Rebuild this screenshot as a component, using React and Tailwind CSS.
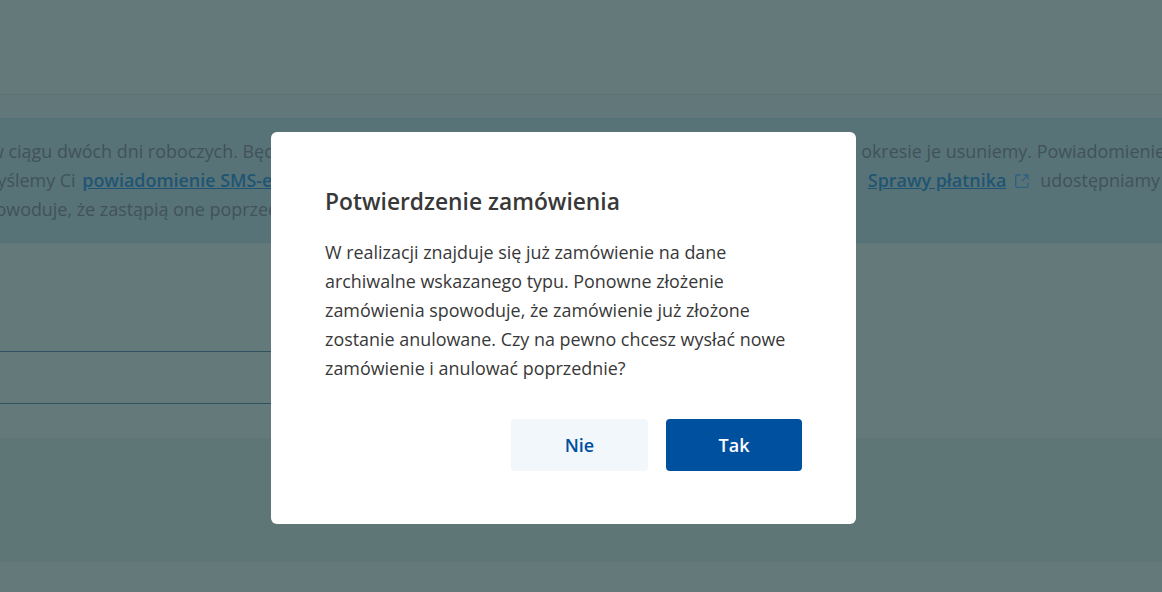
import React from "react";

const font = "font-['Open_Sans',sans-serif]";

const ExternalIcon = () => (
  <svg width="14" height="14" viewBox="0 0 14 14" fill="none" stroke="#2f6080" strokeWidth="1.3" className="shrink-0">
    <path d="M5.500 1H2a1.300 1.300 0 0 0-1.300 1.300V12a1.300 1.300 0 0 0 1.300 1.300H11.700a1.300 1.300 0 0 0 1.300-1.300V8.500" />
    <path d="M8.500 1H13V5.500M13 1L7 7" />
  </svg>
);

export default function App() {
  return (
    <div className={`relative h-[592px] w-[1162px] overflow-hidden bg-[#64797a] ${font}`}>
      {/* Background page */}
      <div className="h-[95px] border-b border-[#5a7274]" />
      <div className="h-[23px] bg-[#61777a]" />

      {/* Info panel */}
      <div className="h-[125px] border-y border-[#527078] bg-[#587378] pt-[18px] text-[17.92px] leading-[29px] text-[#40525a]">
        <div className="flex h-[29px] justify-between overflow-hidden whitespace-nowrap">
          <span className="ml-[-10px]">w ciągu dwóch dni roboczych. Będziemy</span>
          <span className="mr-[-3px]">okresie je usuniemy. Powiadomienie</span>
        </div>
        <div className="flex h-[29px] justify-between overflow-hidden whitespace-nowrap">
          <span className="ml-[-19px]">
            Wyślemy Ci{" "}
            <a className="ml-[2px] font-semibold text-[#1f5573] underline">powiadomienie SMS-em</a>
          </span>
          <span className="mr-[2px] flex items-center">
            <a className="font-semibold text-[#1f5573] underline">Sprawy płatnika</a>
            <span className="ml-[9px] mr-[11px]">
              <ExternalIcon />
            </span>
            udostępniamy
          </span>
        </div>
        <div className="h-[29px] overflow-hidden whitespace-nowrap">
          <span className="ml-[-24px] inline-block">spowoduje, że zastąpią one poprzednie</span>
        </div>
      </div>

      {/* Form area */}
      <div className="h-[195px] bg-[#64797a] pt-[108px]">
        <div className="h-px w-[400px] bg-[#2f5160]" />
        <div className="mt-[51px] h-px w-[400px] bg-[#2f5160]" />
      </div>

      <div className="h-[124px] bg-[#5f7677]" />
      <div className="h-[30px] bg-[#64797a]" />

      {/* Modal */}
      <div className="absolute left-[271px] top-[132px] flex h-[392px] w-[585px] flex-col rounded-md bg-white px-[54px] pt-[53px] text-[#383838]">
        <h2 className="text-[22.8px] leading-[34px] font-semibold">Potwierdzenie zamówienia</h2>
        <p className="mt-[19px] text-[17.92px] leading-[29px]">
          W realizacji znajduje się już zamówienie na dane
          <br />
          archiwalne wskazanego typu. Ponowne złożenie
          <br />
          zamówienia spowoduje, że zamówienie już złożone
          <br />
          zostanie anulowane. Czy na pewno chcesz wysłać nowe
          <br />
          zamówienie i anulować poprzednie?
        </p>
        <div className="mt-[36px] flex justify-end gap-[18px]">
          <button className="h-[52px] w-[137px] rounded bg-[#f2f7fc] text-[18px] font-semibold text-[#0050a0]">Nie</button>
          <button className="h-[52px] w-[136px] rounded bg-[#0050a0] text-[18px] font-semibold text-white">Tak</button>
        </div>
      </div>
    </div>
  );
}
